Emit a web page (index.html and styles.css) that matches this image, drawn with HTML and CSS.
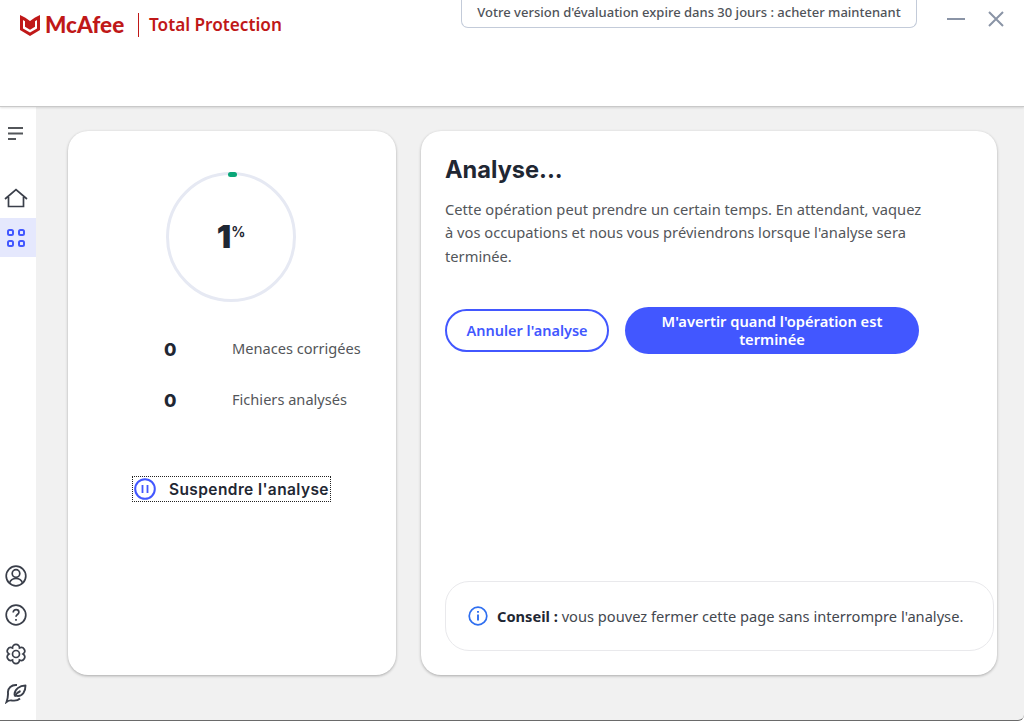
FILE: index.html
```html
<!DOCTYPE html>
<html lang="fr">
<head>
  <meta charset="UTF-8">
  <meta name="viewport" content="width=device-width, initial-scale=1.0">
  <title>McAfee Total Protection</title>
  <link rel="stylesheet" href="styles.css">
</head>
<body>
  <div class="app">
    <header class="top-bar">
      <div class="brand">
        <svg class="brand-mark" viewBox="0 0 20 22" width="20" height="22">
          <path fill="#c01818" fill-rule="evenodd" d="M0 1l5 2.600L10 7l5-3.400L20 1v15l-10 6-10-6zM3 6v8.400l7 4.200 7-4.200V6l-2 1.200v5.600l-5 3-5-3V7.200z"/>
        </svg>
        <span class="brand-name">McAfee</span>
        <span class="brand-sep"></span>
        <span class="brand-product">Total Protection</span>
      </div>
      <div class="trial-banner">Votre version d'évaluation expire dans 30 jours : acheter maintenant</div>
      <div class="window-btns">
        <svg viewBox="0 0 18 18" width="18" height="18"><path d="M0 9h18" stroke="#8a94a6" stroke-width="2"/></svg>
        <svg viewBox="0 0 18 18" width="18" height="18"><path d="M2 2l14 14M16 2L2 16" stroke="#8a94a6" stroke-width="2"/></svg>
      </div>
    </header>

    <div class="body-row">
      <nav class="side-nav">
        <div class="nav-top">
          <div class="nav-item menu">
            <svg viewBox="0 0 18 16" width="18" height="16"><path d="M1 2h15M1 7.500h15M1 13h8" stroke="#53565a" stroke-width="2"/></svg>
          </div>
          <div class="nav-item home">
            <svg viewBox="0 0 24 20" width="24" height="20" fill="none" stroke="#3a3f4a" stroke-width="1.700"><path d="M1 11L12 1.500 23 11M4.500 9v9.500h15V9"/></svg>
          </div>
          <div class="nav-item active">
            <svg viewBox="0 0 20 20" width="20" height="20" fill="none" stroke="#4257ff" stroke-width="2"><rect x="2" y="2" width="5" height="5" rx="1.500"/><rect x="13" y="2" width="5" height="5" rx="1.500"/><rect x="2" y="13" width="5" height="5" rx="1.500"/><rect x="13" y="13" width="5" height="5" rx="1.500"/></svg>
          </div>
        </div>
        <div class="nav-bottom">
          <div class="nav-item">
            <svg viewBox="0 0 22 22" width="22" height="22" fill="none" stroke="#3a3f4a" stroke-width="1.700"><circle cx="11" cy="11" r="9.800"/><circle cx="11" cy="8.500" r="3.800"/><path d="M4.500 18c1-3 3.500-4.500 6.500-4.500s5.500 1.500 6.500 4.500"/></svg>
          </div>
          <div class="nav-item">
            <svg viewBox="0 0 22 22" width="22" height="22" fill="none" stroke="#3a3f4a" stroke-width="1.700"><circle cx="11" cy="11" r="9.800"/><path d="M8.200 8.500c0-1.700 1.300-2.800 2.900-2.800s2.800 1.100 2.800 2.500c0 2.300-2.900 2.300-2.900 4.600M11 15v1.800"/></svg>
          </div>
          <div class="nav-item">
            <svg viewBox="0 0 22 22" width="22" height="22" fill="none" stroke="#3a3f4a" stroke-width="1.700"><circle cx="11" cy="11" r="3.500"/><path d="M14.500 4.940A3.500 3.500 0 0 1 18 11A3.500 3.500 0 0 1 14.500 17.060A3.500 3.500 0 0 1 7.500 17.060A3.500 3.500 0 0 1 4 11A3.500 3.500 0 0 1 7.500 4.940A3.500 3.500 0 0 1 14.500 4.940z"/></svg>
          </div>
          <div class="nav-item">
            <svg viewBox="0 0 22 22" width="22" height="22" fill="none" stroke="#3a3f4a" stroke-width="1.900"><path d="M12 3C6.500 2.500 2.500 6 3 11c.2 3-.5 6-1.500 9 2-1.500 3.500-2 5.500-1.500 3.500.5 6 0 8-2"/><path d="M9.500 12.500c0-5 5-9 11-9 0 6-3 10.500-7.500 10.500-1.500 0-3.500-.5-3.500-1.500z" stroke-linejoin="round"/><path d="M9.500 14.500c1.500-3 3.500-4.500 6-5.500"/></svg>
          </div>
        </div>
      </nav>

      <main class="content">
        <section class="card scan-card">
          <div class="ring">
            <span class="ring-dot"></span>
            <span class="ring-value">1</span><span class="ring-unit">%</span>
          </div>
          <div class="stats">
            <div class="stat-num">0</div><div class="stat-label">Menaces corrigées</div>
            <div class="stat-num">0</div><div class="stat-label">Fichiers analysés</div>
          </div>
          <div class="pause-link">
            <svg viewBox="0 0 22 22" width="22" height="22" fill="none" stroke="#4257ff"><circle cx="11" cy="11" r="9.800" stroke-width="2"/><path d="M8.500 7v8M13.500 7v8" stroke-width="1.800"/></svg>
            <span>Suspendre l'analyse</span>
          </div>
        </section>

        <section class="card info-card">
          <h1>Analyse...</h1>
          <p class="lead">Cette opération peut prendre un certain temps. En attendant, vaquez à vos occupations et nous vous préviendrons lorsque l'analyse sera terminée.</p>
          <div class="actions">
            <button class="btn btn-outline">Annuler l'analyse</button>
            <button class="btn btn-solid">M'avertir quand l'opération est terminée</button>
          </div>
          <div class="tip">
            <svg viewBox="0 0 20 20" width="20" height="20" fill="none" stroke="#2f6ff0"><circle cx="10" cy="10" r="8.800" stroke-width="1.700"/><path d="M10 8.500v6M10 5v1.800" stroke-width="1.900"/></svg>
            <span><b>Conseil :</b> vous pouvez fermer cette page sans interrompre l'analyse.</span>
          </div>
        </section>
      </main>
    </div>
  </div>
</body>
</html>
```

FILE: styles.css
```css
html, body {
  height: 100%;
}
body {
  margin: 0;
  background-color: #fff;
  color: #53565a;
  font-family: "Noto Sans", Arial, sans-serif;
  overflow: hidden;
}
.app {
  display: flex;
  flex-direction: column;
  height: 720px;
  background-color: #f1f1f1;
  border-bottom: 1px solid #6a6a6a;
  border-bottom-right-radius: 6px;
  overflow: hidden;
}

/* top bar */
.top-bar {
  display: flex;
  align-items: flex-start;
  height: 106px;
  flex-shrink: 0;
  background-color: #fff;
  border-bottom: 1px solid #c9c9c9;
  box-shadow: 0 1px 2px rgba(0, 0, 0, 0.12);
  position: relative;
}
.brand {
  display: flex;
  align-items: center;
  width: 461px;
  padding: 13px 0 0 20px;
  box-sizing: border-box;
  color: #c01818;
}
.brand-mark {
  margin-right: 5px;
}
.brand-name {
  font-family: "Lato", sans-serif;
  font-weight: 900;
  font-size: 22.500px;
  line-height: 24px;
  width: 93px;
}
.brand-sep {
  width: 1px;
  height: 24px;
  background-color: #c01818;
  margin-right: 10px;
}
.brand-product {
  font-family: "Noto Sans", sans-serif;
  font-weight: 600;
  font-size: 17.200px;
  line-height: 24px;
}
.trial-banner {
  width: 456px;
  height: 28px;
  box-sizing: border-box;
  border: 1px solid #c3cbd9;
  border-top: none;
  border-radius: 0 0 7px 7px;
  text-align: center;
  font-size: 13px;
  font-weight: 500;
  line-height: 25px;
  color: #4f5359;
}
.window-btns {
  display: flex;
  gap: 22px;
  padding: 10px 0 0 30px;
}

/* side nav */
.body-row {
  display: flex;
  flex: 1;
  min-height: 0;
}
.side-nav {
  width: 36px;
  flex-shrink: 0;
  background-color: #fff;
  display: flex;
  flex-direction: column;
  justify-content: space-between;
}
.nav-item {
  display: flex;
  align-items: center;
  justify-content: center;
  height: 39px;
  padding-right: 4px;
}
.nav-item.menu {
  height: 54px;
}
.nav-item.home {
  height: 57px;
  box-sizing: border-box;
  padding-top: 16px;
}
.nav-item.active {
  background-color: #e5e8fd;
}
.nav-bottom {
  padding-bottom: 8px;
}
.nav-bottom .nav-item {
  padding-right: 5px;
}

/* cards */
.content {
  display: flex;
  gap: 25px;
  padding: 24px 0 0 32px;
}
.card {
  height: 544px;
  box-sizing: border-box;
  background-color: #fff;
  border-radius: 20px;
  box-shadow: 0 1px 3px rgba(0, 0, 0, 0.3);
}
.scan-card {
  width: 328px;
  padding-top: 41px;
}
.info-card {
  width: 576px;
  padding: 24px 3px 24px 24px;
  display: flex;
  flex-direction: column;
}

/* progress ring */
.ring {
  position: relative;
  width: 130px;
  height: 130px;
  margin: 0 auto 0 98px;
  box-sizing: border-box;
  border: 3px solid #e6e9f3;
  border-radius: 50%;
  display: flex;
  align-items: center;
  justify-content: center;
  color: #1f2733;
  font-family: "Inter", sans-serif;
  font-weight: 900;
}
.ring-dot {
  position: absolute;
  top: -3px;
  left: 59px;
  width: 9px;
  height: 5px;
  border-radius: 3px;
  background-color: #0aa678;
}
.ring-value {
  font-size: 32px;
  line-height: 32px;
}
.ring-unit {
  font-size: 14px;
  font-weight: 700;
  line-height: 14px;
  align-self: flex-start;
  margin-top: 50px;
}

/* counters */
.stats {
  display: grid;
  grid-template-columns: 68px 1fr;
  row-gap: 26px;
  padding: 35px 0 0 96px;
}
.stat-num {
  padding-top: 1px;
  font-family: "Inter", sans-serif;
  font-weight: 800;
  font-size: 18px;
  line-height: 24px;
  color: #1f2733;
}
.stat-label {
  margin-top: -1px;
  font-size: 14.600px;
  line-height: 24px;
}

.pause-link {
  display: flex;
  align-items: center;
  gap: 13px;
  width: 197px;
  height: 24px;
  box-sizing: border-box;
  margin: 64px 0 0 65px;
  padding-left: 1px;
  outline: 1px dotted #222;
  font-family: "Inter", sans-serif;
  font-weight: 600;
  font-size: 15.500px;
  letter-spacing: 0.400px;
  color: #1f2733;
  white-space: nowrap;
}

/* right card */
.info-card h1 {
  margin: 0;
  font-family: "Inter", sans-serif;
  font-weight: 700;
  font-size: 23.600px;
  line-height: 30px;
  color: #1f2733;
}
.lead {
  margin: 13px 0 0;
  width: 482px;
  font-size: 14.700px;
  line-height: 23.300px;
}
.actions {
  display: flex;
  align-items: center;
  gap: 16px;
  margin-top: 39px;
}
.btn {
  font-family: "Noto Sans", sans-serif;
  font-weight: 600;
  font-size: 14.500px;
  line-height: 18px;
  border-radius: 24px;
  cursor: pointer;
}
.btn-outline {
  width: 164px;
  height: 43px;
  background-color: #fff;
  border: 2px solid #4257ff;
  color: #4257ff;
}
.btn-solid {
  width: 294px;
  height: 47px;
  padding: 0 30px;
  font-size: 14.700px;
  background-color: #4257ff;
  border: none;
  color: #fff;
}
.tip {
  display: flex;
  align-items: center;
  gap: 9px;
  height: 70px;
  margin-top: auto;
  padding-left: 22px;
  box-sizing: border-box;
  border: 1px solid #e9e9ec;
  border-radius: 24px;
  font-size: 14.650px;
  color: #44484f;
}
.tip b {
  font-weight: 700;
  color: #1f2733;
}
```
